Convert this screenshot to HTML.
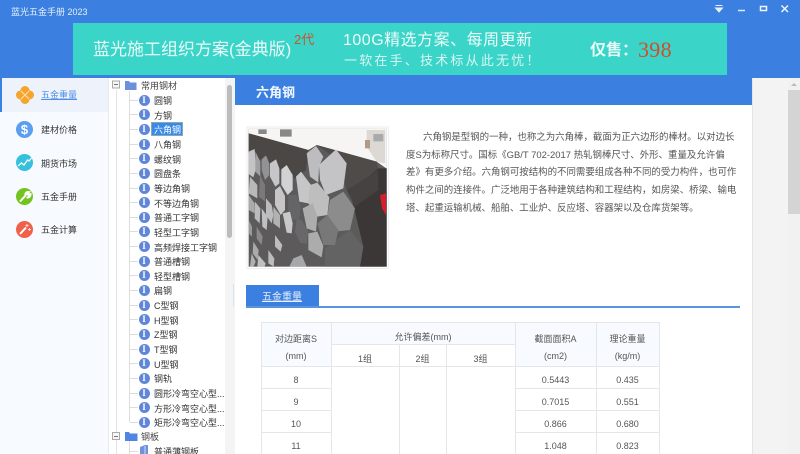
<!DOCTYPE html>
<html lang="zh"><head><meta charset="utf-8"><title>蓝光五金手册 2023</title>
<style>
html,body{margin:0;padding:0;width:800px;height:454px;overflow:hidden;background:#fff}
body{position:relative;font-family:"Liberation Sans","Noto Sans CJK SC",sans-serif;font-size:9px;color:#333;filter:blur(.3px)}
div,span,svg{position:absolute;white-space:nowrap}
.s{left:41px;line-height:14px;font-size:9px;color:#333;margin-top:.5px}
.c{left:16px;width:17px;height:17px;border-radius:50%}
.t{left:154px;line-height:14px;font-size:9px;color:#333;height:14px;margin-top:1px}
.i{left:138.500px;width:11px;height:11px;border-radius:50%;background:#5f86d8;color:#fff;font:bold 9px/11px "Liberation Serif",serif;text-align:center}
.h{left:130px;width:8px;height:1px;background:#ddd}
.p{left:406px;line-height:16px;color:#555;font-size:9.450px;margin-top:1.500px}
.v{background:#e4e6ea}
.l{text-align:center;font-size:9px;line-height:14px;color:#555;margin-top:1.500px}
</style></head><body>
<div style="left:0;top:0;width:800px;height:78px;background:#3b80e0"></div>
<div style="left:11px;top:4.500px;line-height:14px;color:#e6effb;font-size:9px">蓝光五金手册 2023</div>
<svg style="left:700px;top:0" width="100" height="20" viewBox="0 0 100 20"><path d="M15.500 5.500h7M15.500 8h7l-3.500 4z" fill="#e8f0fb" stroke="#e8f0fb"/><path d="M38 10.500h7" stroke="#dfe9fa" stroke-width="1.500"/><rect x="60.500" y="6.500" width="6" height="4" fill="none" stroke="#eef4fd" stroke-width="1.500"/><path d="M81.500 5.500l6.500 6.500M88 5.500l-6.500 6.500" stroke="#eef4fd" stroke-width="1.500"/></svg>

<div style="left:73px;top:23px;width:654px;height:52px;background:#3ad4c8"></div>
<div style="left:93px;top:37px;font-size:17px;line-height:26px;color:#e9fbf9">蓝光施工组织方案(金典版)</div>
<div style="left:294px;top:32px;font-size:13px;line-height:16px;color:#c8552e">2代</div>
<div style="left:343px;top:29px;font-size:16px;line-height:24px;color:#eefcfb;letter-spacing:.5px">100G精选方案、每周更新</div>
<div style="left:344px;top:51px;font-size:13px;line-height:20px;color:#d8f6f3;letter-spacing:2.200px">一软在手、技术标从此无忧！</div>
<div style="left:590px;top:39px;font-size:16px;line-height:24px;color:#e9fbf9;font-weight:bold">仅售：</div>
<div style="left:638px;top:37px;font:22px/26px 'Liberation Serif',serif;color:#cf4f2c;letter-spacing:.3px">398</div>

<!-- sidebar -->
<div style="left:0;top:78px;width:109px;height:376px;background:#f7fbff"></div>
<div style="left:2px;top:78px;width:107px;height:34px;background:#eef3fb"></div>
<div style="left:0;top:78px;width:2px;height:34px;background:#3b80e0"></div>
<svg style="left:15px;top:85px" width="20" height="20" viewBox="0 0 20 20"><g fill="#f5a42c"><circle cx="10" cy="5.500" r="4.500"/><circle cx="10" cy="14.500" r="4.500"/><circle cx="5.500" cy="10" r="4.500"/><circle cx="14.500" cy="10" r="4.500"/></g><path d="M6 6l8 8M14 6l-8 8" stroke="#fbe3b8" stroke-width="1"/></svg>
<div class="s" style="top:87.500px;color:#4f8ee6;text-decoration:underline">五金重量</div>
<div class="c" style="top:120.500px;background:#5c9ef0;color:#fff;font:bold 13px/17px 'Liberation Sans';text-align:center">$</div>
<div class="s" style="top:122px">建材价格</div>
<div class="c" style="top:154px;background:#35c0de"></div>
<svg style="left:16px;top:154px" width="17" height="17" viewBox="0 0 17 17"><path d="M2 12l3.500-3 2.500 2 3.500-5 1.500 1 2.500-3" fill="none" stroke="#fff" stroke-width="1.300"/></svg>
<div class="s" style="top:156px">期货市场</div>
<div class="c" style="top:187.500px;background:#74c41f"></div>
<svg style="left:16px;top:187.500px" width="17" height="17" viewBox="0 0 17 17"><path d="M4 13.500l6-6.500M9.500 7.500c-.5-2 1-4 3.500-3.500l-1.500 2 1 1 2-1c.3 2.500-2 4-4 3.200" fill="none" stroke="#fff" stroke-width="2"/></svg>
<div class="s" style="top:189px">五金手册</div>
<div class="c" style="top:221px;background:#f1604a"></div>
<svg style="left:16px;top:221px" width="17" height="17" viewBox="0 0 17 17"><path d="M4 13l6-6.500" stroke="#fff" stroke-width="2"/><path d="M11 3v3M9.500 4.500h3M13.500 7v3M12 8.500h3" stroke="#fde0da" stroke-width="1"/></svg>
<div class="s" style="top:222px">五金计算</div>

<!-- tree -->
<div style="left:108px;top:78px;width:127px;height:376px;background:#fff"></div>
<div style="left:108px;top:78px;width:1px;height:376px;background:#e6ecf4"></div>
<div style="left:225px;top:78px;width:10px;height:376px;background:#f4f4f4"></div>
<div style="left:226.500px;top:85px;width:5px;height:153px;border-radius:3px;background:#bcbcbc"></div>
<div style="left:232.500px;top:284px;width:1.500px;height:22px;background:#d4e2f3"></div>
<div style="left:115.500px;top:90px;width:1px;height:364px;background:#e4e4e4"></div>
<div style="left:129px;top:91px;width:1px;height:331px;background:#ddd"></div>
<div style="left:129px;top:441px;width:1px;height:13px;background:#ddd"></div>
<svg style="left:112px;top:80px" width="26" height="11" viewBox="0 0 26 11"><rect x=".500" y="1" width="7" height="7" fill="#f6f6f6" stroke="#aaa"/><path d="M2 4.500h4" stroke="#777"/><path d="M13 1h4l1 1.500h6.500V10H13z" fill="#6d8fdc"/></svg>
<div class="t" style="left:141px;top:78px;color:#444">常用钢材</div>
<div style="left:112px;top:432px;width:8px;height:8px;background:#f6f6f6;border:1px solid #aaa;box-sizing:border-box"></div>
<div style="left:114px;top:435.500px;width:4px;height:1px;background:#777"></div>
<svg style="left:125px;top:431px" width="13" height="11" viewBox="0 0 13 11"><path d="M0 1h4l1 1.500h7.500V10H0z" fill="#4f86e2"/></svg>
<div class="t" style="left:141px;top:429px;color:#444">钢板</div>
<div class="h" style="top:100px"></div><div class="i" style="top:94.500px">I</div><div class="t" style="top:93px">圆钢</div>
<div class="h" style="top:114px"></div><div class="i" style="top:109px">I</div><div class="t" style="top:107.500px">方钢</div>
<div class="h" style="top:129px"></div><div class="i" style="top:123.800px">I</div><div style="left:151px;top:122px;width:32px;height:14px;background:#3b8ae8;border:1px solid #8aa;box-sizing:border-box"></div><div class="t" style="top:121.500px;color:#fff">六角钢</div>
<div class="h" style="top:144px"></div><div class="i" style="top:138.500px">I</div><div class="t" style="top:137px">八角钢</div>
<div class="h" style="top:158px"></div><div class="i" style="top:153px">I</div><div class="t" style="top:151.500px">螺纹钢</div>
<div class="h" style="top:173px"></div><div class="i" style="top:167.800px">I</div><div class="t" style="top:166px">圆盘条</div>
<div class="h" style="top:188px"></div><div class="i" style="top:182.500px">I</div><div class="t" style="top:181px">等边角钢</div>
<div class="h" style="top:202px"></div><div class="i" style="top:197px">I</div><div class="t" style="top:195.500px">不等边角钢</div>
<div class="h" style="top:217px"></div><div class="i" style="top:211.800px">I</div><div class="t" style="top:210px">普通工字钢</div>
<div class="h" style="top:231px"></div><div class="i" style="top:226.400px">I</div><div class="t" style="top:225px">轻型工字钢</div>
<div class="h" style="top:246px"></div><div class="i" style="top:241px">I</div><div class="t" style="top:239.500px">高频焊接工字钢</div>
<div class="h" style="top:261px"></div><div class="i" style="top:255.700px">I</div><div class="t" style="top:254px">普通槽钢</div>
<div class="h" style="top:275px"></div><div class="i" style="top:270.300px">I</div><div class="t" style="top:268.500px">轻型槽钢</div>
<div class="h" style="top:290px"></div><div class="i" style="top:285px">I</div><div class="t" style="top:283px">扁钢</div>
<div class="h" style="top:305px"></div><div class="i" style="top:299.600px">I</div><div class="t" style="top:298px">C型钢</div>
<div class="h" style="top:319px"></div><div class="i" style="top:314.300px">I</div><div class="t" style="top:312.500px">H型钢</div>
<div class="h" style="top:334px"></div><div class="i" style="top:329px">I</div><div class="t" style="top:327px">Z型钢</div>
<div class="h" style="top:349px"></div><div class="i" style="top:343.600px">I</div><div class="t" style="top:342px">T型钢</div>
<div class="h" style="top:363px"></div><div class="i" style="top:358.200px">I</div><div class="t" style="top:356.500px">U型钢</div>
<div class="h" style="top:378px"></div><div class="i" style="top:372.900px">I</div><div class="t" style="top:371px">钢轨</div>
<div class="h" style="top:393px"></div><div class="i" style="top:387.500px">I</div><div class="t" style="top:386px">圆形冷弯空心型...</div>
<div class="h" style="top:407px"></div><div class="i" style="top:402.200px">I</div><div class="t" style="top:400.500px">方形冷弯空心型...</div>
<div class="h" style="top:422px"></div><div class="i" style="top:416.800px">I</div><div class="t" style="top:415px">矩形冷弯空心型...</div>
<div class="h" style="top:451px"></div>
<svg style="left:138px;top:445px" width="12" height="9" viewBox="0 0 12 9"><path d="M2 2l5-2h3v9H2z" fill="#6d93dc"/><path d="M7 1v8" stroke="#cfdcf5"/></svg>
<div class="t" style="top:444px">普通薄钢板</div>

<!-- content -->
<div style="left:235px;top:78px;width:517px;height:27px;background:#3b80e0"></div>
<div style="left:256px;top:84px;line-height:18px;font-size:13px;font-weight:bold;color:#f2f7fe">六角钢</div>
<div style="left:752px;top:78px;width:48px;height:376px;background:#f3f3f3;border-left:1px solid #e4e4e4;box-sizing:border-box"></div>
<div style="left:788px;top:78px;width:12px;height:376px;background:#f1f1f1"></div>
<div style="left:788px;top:90px;width:12px;height:124px;background:#d4d4d4"></div>
<div style="left:791px;top:83px;width:0;height:0;border:3px solid transparent;border-bottom:3px solid #bbb;border-top:0"></div>

<!-- photo -->
<svg style="left:240px;top:120px" width="160" height="160" viewBox="0 0 480 480">
<rect x="21" y="21" width="424" height="424" fill="#fff" stroke="#e4e4e4" stroke-width="2"/>
<rect x="26" y="26" width="414" height="414" fill="#5c5a5a"/>
<path d="M26 26h414v120l-30-21-180-50-25 15L26 40z" fill="#f6f5f3"/>
<path d="M380 30h55v100l-25-5-30-45z" fill="#dcd9d4"/><path d="M400 42h30v22h-30z" fill="#aaa"/><path d="M375 60h15v25h-15z" fill="#b09a88"/><path d="M55 28h25v14H55zM120 28h35v22h-35z" fill="#888"/>
<path d="M26 40L205 90l-7 60-33 25-139-75z" fill="#4a4745"/>
<path d="M230 75l180 50 5 25-95 60-25-90z" fill="#4f4b49"/>
<path d="M415 145h25v295h-80l10-60-40-165z" fill="#3a3736"/><path d="M320 210l95-60v60l-70 50z" fill="#454241"/><path d="M420 225l18-5v65l-12-20z" fill="#d3202a"/>
<path d="M255 385l75-55 40 50-10 60H255z" fill="#646364"/>
<path d="M200 100l28-22 22 32-13 30-2 48-25-18z" fill="#bdbdbf"/>
<path d="M237 135l51-47 32 42-10 75-52 20-18-45z" fill="#c4c4c6"/>
<path d="M168 170l15-15 30 40-8 55-27-5z" fill="#c6c6c8"/>
<path d="M210 195l22-7 36 44-6 53-30 5-27-40z" fill="#bebebe"/>
<path d="M270 240l40-25 35 50-15 65-45 5-23-50z" fill="#8c8c8c"/>
<path d="M232 310l30-25 33 45-10 45h-35z" fill="#787878"/>
<path d="M188 265l30-15 14 40-4 45-28-10z" fill="#adadad"/>
<path d="M205 340l27-5 18 43-5 34-40-22z" fill="#acacac"/>
<path d="M170 300h15l20 35-5 37-20-4-15-33z" fill="#68686a"/>
<path d="M145 225h25l12 35-4 40-23-2-10-28z" fill="#656567"/>
<path d="M128 280l22-5 8 35-3 30-15-2z" fill="#c8c8c8"/>
<path d="M124 148l16-13 18 30v45l-15 15-19-30z" fill="#d2d2d4"/>
<path d="M90 130l18-12 10 27v45l-12 10-16-30z" fill="#c6c6c8"/>
<path d="M105 210l15-12 15 30v42l-13 15-17-30z" fill="#c6c6c6"/>
<path d="M65 118l13-12 10 24v35l-13 15-10-30z" fill="#929294"/>
<path d="M78 235l17 20 5 30-5 25-17-25z" fill="#bcbcbe"/><path d="M100 260l20 25v40l-20-15z" fill="#b2b2b4"/>
<path d="M26 95l18-8 4 60-8 25-14-10z" fill="#c4c4c6"/><path d="M46 95l15 30v45l-15-15z" fill="#a0a0a2"/>
<path d="M30 170l22 25v40l-26-15z" fill="#b8b8ba"/><path d="M60 165l15 30v50l-18-15z" fill="#7a7a7c"/>
<path d="M26 225l18 25v30l-18-10z" fill="#aaa"/><path d="M45 245l16 20-2 45-15-15z" fill="#bbb"/><path d="M65 265l18 25-3 40-13-10z" fill="#c0c0c2"/>
<path d="M26 300l10 20v30l-10-10z" fill="#999"/><path d="M105 345l22 30-5 20-17-15z" fill="#bdbdbf"/>
<path d="M40 365l16 25-3 30-15-20z" fill="#aaa"/><path d="M85 390l18 25-2 25-16-10z" fill="#bcbcbe"/><path d="M55 405l22 25-3 10H52z" fill="#c0c0c2"/><path d="M35 400l12 25-6 15H30z" fill="#b0b0b2"/>
<path d="M160 415l25-10 15 35h-52z" fill="#a8a8aa"/><path d="M50 320l18 30-3 25-15-20z" fill="#8a8a8c"/>
</svg>

<div class="p" style="left:423px;top:128.500px">六角钢是型钢的一种，也称之为六角棒，截面为正六边形的棒材。以对边长</div>
<div class="p" style="top:146px">度S为标称尺寸。国标《GB/T 702-2017 热轧钢棒尺寸、外形、重量及允许偏</div>
<div class="p" style="top:163.500px">差》有更多介绍。六角钢可按结构的不同需要组成各种不同的受力构件，也可作</div>
<div class="p" style="top:181px">构件之间的连接件。广泛地用于各种建筑结构和工程结构，如房梁、桥梁、输电</div>
<div class="p" style="top:199px">塔、起重运输机械、船舶、工业炉、反应塔、容器架以及仓库货架等。</div>

<div style="left:246px;top:285px;width:73px;height:22px;background:#3b80e0"></div>
<div style="left:246px;top:306px;width:494px;height:2px;background:#5c94dc"></div>
<div style="left:262px;top:291px;line-height:14px;font-size:10px;color:#e8f1fc;text-decoration:underline">五金重量</div>

<!-- table -->
<div style="left:261px;top:322px;width:399px;height:44px;background:#f7fbff"></div>
<div style="left:331px;top:344px;width:184px;height:22px;background:#fff"></div>
<div class="v" style="left:261px;top:322px;width:399px;height:1px"></div>
<div class="v" style="left:331px;top:344px;width:184px;height:1px"></div>
<div class="v" style="left:261px;top:366px;width:399px;height:1px"></div>
<div class="v" style="left:261px;top:388px;width:70px;height:1px"></div><div class="v" style="left:515px;top:388px;width:145px;height:1px"></div>
<div class="v" style="left:261px;top:410px;width:70px;height:1px"></div><div class="v" style="left:515px;top:410px;width:145px;height:1px"></div>
<div class="v" style="left:261px;top:432px;width:70px;height:1px"></div><div class="v" style="left:515px;top:432px;width:145px;height:1px"></div>
<div class="v" style="left:261px;top:322px;width:1px;height:132px"></div>
<div class="v" style="left:331px;top:322px;width:1px;height:132px"></div>
<div class="v" style="left:399px;top:344px;width:1px;height:110px"></div>
<div class="v" style="left:446px;top:344px;width:1px;height:110px"></div>
<div class="v" style="left:515px;top:322px;width:1px;height:132px"></div>
<div class="v" style="left:596px;top:322px;width:1px;height:132px"></div>
<div class="v" style="left:659px;top:322px;width:1px;height:132px"></div>

<div class="l" style="left:261px;width:70px;top:330px">对边距离S</div>
<div class="l" style="left:261px;width:70px;top:347px">(mm)</div>
<div class="l" style="left:331px;width:184px;top:328px">允许偏差(mm)</div>
<div class="l" style="left:331px;width:68px;top:350px">1组</div>
<div class="l" style="left:399px;width:47px;top:350px">2组</div>
<div class="l" style="left:446px;width:69px;top:350px">3组</div>
<div class="l" style="left:515px;width:81px;top:330px">截面面积A</div>
<div class="l" style="left:515px;width:81px;top:347px">(cm2)</div>
<div class="l" style="left:596px;width:63px;top:330px">理论重量</div>
<div class="l" style="left:596px;width:63px;top:347px">(kg/m)</div>
<div class="l" style="left:261px;width:70px;top:371px">8</div><div class="l" style="left:515px;width:81px;top:371px">0.5443</div><div class="l" style="left:596px;width:63px;top:371px">0.435</div>
<div class="l" style="left:261px;width:70px;top:393px">9</div><div class="l" style="left:515px;width:81px;top:393px">0.7015</div><div class="l" style="left:596px;width:63px;top:393px">0.551</div>
<div class="l" style="left:261px;width:70px;top:415px">10</div><div class="l" style="left:515px;width:81px;top:415px">0.866</div><div class="l" style="left:596px;width:63px;top:415px">0.680</div>
<div class="l" style="left:261px;width:70px;top:437px">11</div><div class="l" style="left:515px;width:81px;top:437px">1.048</div><div class="l" style="left:596px;width:63px;top:437px">0.823</div>
</body></html>
